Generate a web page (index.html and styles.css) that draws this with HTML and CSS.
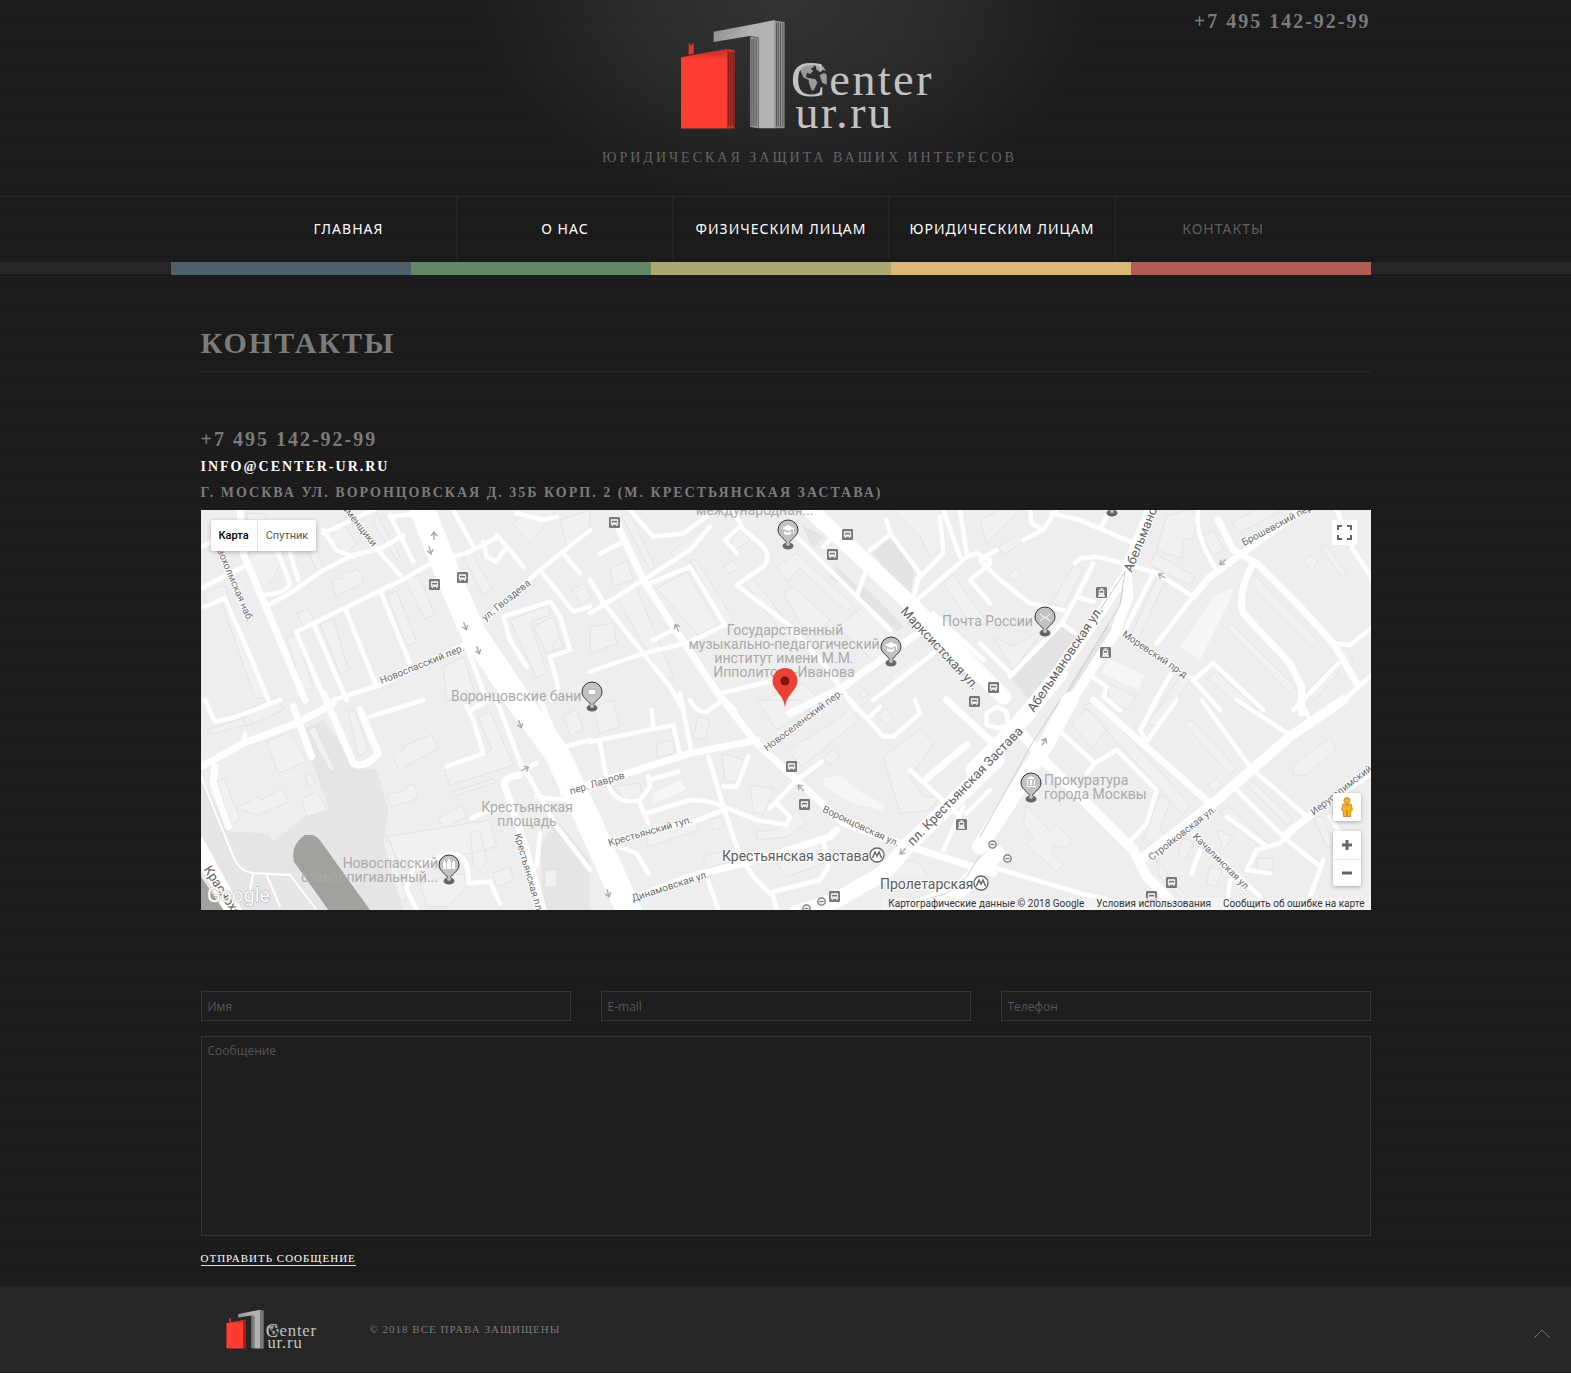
FILE: index.html
```html
<!DOCTYPE html>
<html lang="ru">
<head>
<meta charset="utf-8">
<meta name="viewport" content="width=device-width, initial-scale=1">
<title>Контакты — Center-ur.ru</title>
<link rel="stylesheet" href="styles.css">
</head>
<body>
<svg class="defs" aria-hidden="true">
  <defs>
    <linearGradient id="red-cover" x1="0" y1="0" x2="0" y2="1"><stop offset="0" stop-color="#b92c24"/><stop offset=".14" stop-color="#ff3d31"/></linearGradient>
    <linearGradient id="grey-cover" x1="0" y1="0" x2="1" y2="1"><stop offset="0" stop-color="#8b8b8b"/><stop offset=".35" stop-color="#b2b2b2"/></linearGradient>
    <symbol id="logo" viewBox="268 54 772 336">
      <path fill="#e0352b" d="M291 126l7 12 8-12v35l-15 3z"/>
      <path fill="url(#red-cover)" d="M267 172l140-26v240H267z"/>
      <path fill="#c4322a" d="M407 146l22 4v236h-22z"/>
      <path stroke="#5c1512" stroke-width="2" d="M411 156v222M416 156v222M421 156v222M426 156v222"/>
      <path fill="url(#grey-cover)" d="M366 95l184-35v325h-49V112l-27-4-108 18z"/>
      <path fill="#959595" d="M550 62l29 4v319h-29zM476 110l24 4v271l-24-4z"/>
      <path stroke="#333" stroke-width="2" d="M555 68v312M560 68v312M567 68v312M574 68v312M481 116v262M487 116v262M494 116v262"/>
      <g fill="#9a9a9a"><path d="M622 205l18-12 24-3 4 10-10 6 7 8-10 8-8-4-4 12 12 6-4 4-16-8-6-16zM652 234l20 4 6 10-12 24-6-2-8-22zM672 194l22 4 10 14-14-2-6 6-10-8zM684 226l14-8 8 6v30l-14-6z"/></g>
      <g class="logo-text"><text x="598" y="287" font-size="155">C</text><text class="wide" x="713" y="285" font-size="140">enter</text><text class="wide" x="611" y="385" font-size="140">ur.ru</text></g>
    </symbol>
    <symbol id="bus" viewBox="0 0 12 12"><rect width="12" height="12" rx="1.5" fill="#777"/><path fill="#fff" d="M3 2.5h6a1 1 0 0 1 1 1v5H9v1.2H7.800V8.500H4.200v1.200H3V8.500H2v-5a1 1 0 0 1 1-1z"/><path fill="#777" d="M3 4h6v2H3zM3 7h1v.8H3zM8 7h1v.8H8z"/></symbol>
    <symbol id="tram" viewBox="0 0 12 12"><rect width="12" height="12" rx="1.500" fill="#777"/><path fill="#fff" d="M4 1.500h4v1H6.500V3H8q1 0 1 1v4.500L10 10.500H2L3 8.500V4q0-1 1-1h1.500v-.5H4z"/><path fill="#777" d="M4 4.200h4v2H4zM4 7.500h1v1H4zM7 7.500h1v1H7z"/></symbol>
    <symbol id="pin" viewBox="-12 -12 24 34" overflow="visible"><ellipse cx="0" cy="16" rx="5.500" ry="3.500" fill="#666"/><path d="M0 16C-1 9-10 7-10 0a10 10 0 0 1 20 0C10 7 1 9 0 16z" fill="#c2c2c2" stroke="#333"/><circle cx="0" cy="14" r="2" fill="#c2c2c2"/></symbol>
    <symbol id="metro" viewBox="0 0 16 16"><circle cx="8" cy="8" r="7" fill="#fff" stroke="#666" stroke-width="1.300"/><path fill="none" stroke="#666" stroke-width="1.500" d="M3.500 11L6 5l2 4 2-4 2.500 6"/></symbol>
    <symbol id="exit" viewBox="0 0 9 9"><circle cx="4.500" cy="4.500" r="3.700" fill="#eee" stroke="#777" stroke-width="1.200"/><path stroke="#777" d="M2.500 4.500h4"/></symbol>
    <symbol id="way" viewBox="-5 -5 10 10" overflow="visible"><path fill="none" stroke="#aaa" stroke-width="1.400" d="M0 4V-3M-3 0l3-4 3 4"/></symbol>
  </defs>
</svg>

<header class="header">
  <div class="container header-row">
    <a class="brand" href="#"><svg class="brand-logo" role="img" aria-label="Center-ur.ru"><use href="#logo"/></svg><span class="tagline">Юридическая защита ваших интересов</span></a>
    <a class="phone header-phone" href="tel:+74951429299">+7 495 142-92-99</a>
  </div>
  <nav class="nav">
    <ul class="menu">
      <li><a href="#">Главная</a></li>
      <li><a href="#">О нас</a></li>
      <li><a href="#">Физическим лицам</a></li>
      <li><a href="#">Юридическим лицам</a></li>
      <li><a class="current" href="#">Контакты</a></li>
    </ul>
  </nav>
  <div class="stripe"><div class="container"><div class="stripe-colors"><i></i><i></i><i></i><i></i><i></i></div></div></div>
</header>

<main class="container main">
  <h1>Контакты</h1>
  <address class="contacts">
    <a class="phone" href="tel:+74951429299">+7 495 142-92-99</a>
    <a class="mail" href="mailto:info@center-ur.ru">info@center-ur.ru</a>
    <span class="place">г. Москва ул. Воронцовская д. 35Б корп. 2 (м. Крестьянская застава)</span>
  </address>

  <section class="map" aria-label="Карта">
    <svg class="map-canvas" viewBox="0 0 1170 400" preserveAspectRatio="xMidYMid slice">
      <rect width="1170" height="400" fill="#eee"/>
      <!-- parks and water -->
      <g transform="translate(-11 190) scale(.33333)">
        <path class="park" d="M33 230L120 395 235 400 250 425 350 345 415 320 330 90 400 60 500 200 560 210 595 330 580 430 600 520 640 630H33z"/>
        <path class="park" d="M1100 360L1200 480V630H1060L1050 440z"/>
        <path class="water" d="M345 405H365Q382 408 393 425L540 630H415L312 485Q300 435 345 405zM33 530L100 630H33z"/>
      </g>
      <!-- buildings -->
      <g transform="translate(-11 -90) scale(.33333)" class="b">
        <path d="M390 610l40-12 45 150-25 15zM290 655l30-10 50 160-30 10zM590 525l30-10 60 150-30 15zM645 480l40-15 50 120-30 12zM425 480l30-5 0-15 50-12 18 40-85 40zM320 580l35-12 20 35-30 20zM820 410l25-15 60 110-25 20zM45 520l60-25 10 40 120 300h-40L95 545l-50 0zM350 385l20-10 40 85-20 10zM450 300l50 70-30 30-50-40zM560 280l70 130-10 10-70-110zM970 310l50-40h80l-80 100zM960 600l120-45v30l-60 20 50 150-30 20zM1030 620l60-30 30 90-50 20zM1090 665l20-8 12 30-30 10zM1145 510l35-20 25 40-30 25zM760 740l60-30 40 130h-90zM1110 300l90-30v50l-70 60zM170 280h50l60 120-30 80-50 30-20-70z"/>
      </g>
      <g transform="translate(389 -10) scale(.33333)" class="b">
        <path class="d" d="M740 200l80 80-10 10-90-60zM850 160l50-50 70 100-10 80zM640 80l60 30-30 30zM820 260l120 120-20 10-120-110zM960 340l170 170-10 20-170-160z"/>
        <path d="M300 180h20l110 180-20 15zM455 235l30-5 140 180-25 20zM560 200l60-40 170 155-20 20-140-130-40 40zM580 280l30-20 110 100-60 60zM60 210l50-30 20 60-60 20zM400 200l30-20 15 25-30 15zM740 380l80-60 120 100-80 70zM900 530l80-60 20 20-70 70zM80 290l60-30 10 30 100 240-30 10zM95 50l25-10 75 160-15 8zM240 160l100-75 10 20-90 70zM200 265l90-50 95 160-60 30zM0 380l70-10 10 60-80 30zM520 600l120-50 60 60-20 30zM810 580l15-15 10 20-20 10zM910 30l140 0 0 120-30 20-30-60zM1060 250l30-25 100 140-40 20zM450 90l30 30-60 40 10-50z"/>
      </g>
      <g transform="translate(779 -10) scale(.33333)" class="b">
        <path class="d" d="M90 530L240 380l50 20-140 200zM380 380l25 10-150 240h-30z"/>
        <path class="l" d="M700 290l60-30-10 40-90 180-60-40zM385 475l110 50-20 45-110-50z"/>
        <path d="M285 190l25 15-60 120-35-15zM535 225l25 10-90 190-20-15zM525 160l120 70-15 25-120-60zM530 150l30-100 60-20 30 10-10 80-30-5-5 60zM665 110l35-20 30 60-30 15zM755 70l80-45h80l-130 70zM825 225l190 200-20 15-190-195zM755 370l190 190-15 20-190-195zM970 185l20-20 25 20-20 30zM1040 135l60 85-15 10-60-85zM975 580l70-70 30 10-70 80zM385 550l80 40-20 40-60-30zM710 515l120 110h-40l-110-90zM1070 460l30-15 20 40-10 15zM55 140l60-35 15 20-60 40zM85 225l25-20 15 20-25 20zM0 60l60-30h60L20 130zM40 410l60 30 90-50-90 120zM600 530l30 10-60 90h-40z"/>
      </g>
      <g transform="translate(-11 190) scale(.33333)" class="b">
        <path d="M230 125l70-30 50 90-85 35zM80 245l20-10 50 120-25 20zM140 325l65-35 10 10 60-35 20 40-90 40zM335 295l45-20 35 55-65 20zM345 230l20-8 10 25-20 10zM355 90l20-10 60 130-15 5zM475 35l20-5 40 120-30 20zM610 165l35-20v-10l80-30 20 40-118 65zM865 50l35-15 70 160-190 60-15-45 140-60zM790 275l120-38 5 10-120 40zM590 285l60-15v-12l22-5 13 42-80 25zM745 355l70-40 15 35-70 35zM590 410l310-50 20 80-280 70zM840 400l30-10 20 90-20 30-20-20zM1120 45l40-15 20 60-40 15zM910 520l50-20 10 40-50 20zM1065 510h35v50h-35zM690 550l130-30 10 40-60 60h-60zM150 40l110-50 20 40-110 50zM50 90l120-40 20 20-120 30zM580 430l20-10 50 180-20 0z"/>
      </g>
      <g transform="translate(389 190) scale(.33333)" class="b">
        <path d="M595 150l160-100 30-40 20 50-170 140zM395 160l70 20-30 70-30-10zM325 50l35 10-15 60-35-10zM200 130l50-10 5 40-55 10zM480 255l70 10-30 80-30-10zM70 260l80-10 5 40-50 10zM170 410l150-50 5 30-150 50zM340 470l100-30 10 35-100 30zM545 470l140-50 15 70-110 40zM880 170l110-80 40 40-70 100 40 60 50 0-30 40-90 10zM500 0l60 90 100-60-30-30zM700 170l35-25 15 25-35 25zM860 45l30-20 20 35-20 15zM10 20l60-20 20 80-60 20zM500 395l60-5 60-60 30 40-60 40-90 10zM360 360l30-10 10 30-30 10zM900 520q80-80 110 10"/>
        <path class="l" d="M700 235l50-10 60 50 75 40-10 15-90-20-80-50zM190 280l80-40 20 30-100 40z"/>
      </g>
      <g transform="translate(779 190) scale(.33333)" class="b">
        <path d="M275 70l50-45 60 60-50 60zM310 15l40-10 280 310-20 30zM635 60l135 145-20 20-140-155zM500 70l70-80 30 10-70 80zM940 195l110-80 20 30-90 80h-40zM685 255l25-20 15 20-25 20zM820 245l120 115-20 15-115-115zM745 320l120 110-20 15-125-110zM540 285l30 20-30 80 15 20-20 30-45-20zM610 415l30 10-20 50-25-10zM710 390l50 20-30 40zM690 500l35 10-15 50-30-10zM830 475h50v35h-50zM1000 350h30l30 90h-20zM140 315l70 80 20-20 50 50-30 20-30-10-10 20 40 40-20 20-90-80 20-20-30-40zM530 480l70 90 60 50h-30l-90-90z"/>
      </g>
      <!-- streets -->
      <g transform="translate(-11 -90) scale(.33333)" class="r">
        <path d="M33 505L160 440M225 560L300 520 400 450 490 405 575 385 640 345M225 525Q290 520 300 490L265 400 230 320M300 400l25 80M320 635L640 478 720 432 840 395 925 350M320 640l85 200M370 610l100 230M468 572l92 228M572 515l88 215M400 330l40 60 50 20M400 340l150-70M33 380l120-50M550 375l80 90M600 285l70 140M600 290l90-10M790 270l60 110M45 560l60-25 55 125 75 180M860 620L1050 450 1200 330M1050 450l100 125 50-15M1120 400l50 60M880 365l10 45 30 15 30-45-30-35M925 350l75 90M980 280l80 20 40-10M940 590l140-45 30 45 30 100-60 20 25 90-20 40M940 590l20 70 50 80M430 840L570 795 840 665M830 680l60 160"/>
        <path class="w2" d="M150 270l10 130 185 440"/>
        <path class="w5" d="M690 250L780 480 850 640 985 840"/>
      </g>
      <g transform="translate(389 -10) scale(.33333)" class="r">
        <path d="M620 110L900 390M700 140l40-40M800 290l25-70M890 60l10 40 90 120-20 70M900 105l-60 45M1050 50l10 110-80 80M1060 30l50 140M1110 30l20 130M970 310l160-140 30-10 40 20M1200 190l-60 50 60 70M0 340L160 240 300 150 360 80M30 160l60-30M120 30l70 80 90-10 70-50M180 250l120-50 105 175-115 55M190 420l70-35M0 240L45 315 160 460 240 560 280 630M0 515l160-55 130-30M440 160L405 120 450 80 510 130Q550 170 520 200L440 255 590 370 700 490 740 540M455 80l-25-50M390 580l170-40M720 520l80 110M1000 390l140 130M1030 340l150 140M850 600l180-140"/>
        <path class="w2" d="M75 60l85 180 90 140 140 210 40 40M600 640l160-80 210-150 30-20"/>
        <path class="w4" d="M640 10L960 310 1240 590"/>
      </g>
      <g transform="translate(779 -10) scale(.33333)" class="r">
        <path d="M150 30l5 40 35 20 25-40 15-20M215 40l85 20 150 65M0 180l50-30M0 180l60 60 90 70 100 20M130 120l60-30M365 80l15-30M285 190l15-15 50-5 80 20 100 30 110 70M340 190l-50 100-45 80L90 530M290 290l50 15M245 370l40 30M530 430L640 290M520 220L430 400M655 30Q640 100 710 210M1060 430l50 5 70-55M1070 30l50 120 60 90M410 390l230 150 60-50 150 140M640 540l80 90M580 510l-70 120M320 520l60 40-10 30 50 40M940 630l135-140M1180 520l-120 110M0 430l90 90"/>
        <path class="w2" d="M640 290l45-55L800 150 980 20M715 60l45 90 70 40L960 320l100 110 70 120M820 190Q770 280 790 340L930 490 965 560V640"/>
        <path class="w3" d="M515 20L440 200l5 90-40 110-200 310M440 220L340 370 140 660"/>
        <path class="rail" d="M435 215l-75 115M435 215l-15 100-190 315"/>
      </g>
      <g transform="translate(-11 190) scale(.33333)" class="r">
        <path d="M160 130l5-30M45 0l30 65 65-15L270 0M540 50L700 0M770 200l110-40-30-100-20-40M840 30l60-30M920 0l75 200M1010 205l30-15M1000 200l100 180 100 130M1050 0l60 140 90 170M1085 150l115-30M1040 290l80 10M845 355l55-25 60-5M650 560l20-60 110-40Q840 460 835 550L900 545l30 65M650 570l30 60M1050 400l-10 100"/>
        <path class="w2" d="M33 200l127-70L320 70 430 10M310 20l55 150M400-20l90 210Q520 210 565 160L510 30M75 200l-5 50 45 130M990 225Q935 230 945 260l55 160 60 210"/>
        <path class="w1" d="M33 230l97 240Q150 520 200 520l100 5 80 105M190 520l-10 50M230 525l40 95"/>
        <path class="w4" d="M20 430L140 650"/>
        <path class="w5" d="M970-20l130 180 90 190 130 290"/>
      </g>
      <g transform="translate(389 190) scale(.33333)" class="r">
        <path d="M0 125L250 75l20 90M185 30l5 50M270-20l35 180M300 0q20 40 50 35l50-35M355 170l45 150 50 150 40 60 60 60 10 40M30 130l20 110Q70 320 150 300l30-40-5-30M180 240l85-25M150 310l25 60M170 340l130-40q60 0 100 20l100 40 90 15 10-25-40-40M540 325l80-85 75-55M60 420l240-50 100-40M60 430l80 30 35 60M50 440l90 190M350 530l35 100M550 575l140-35 25-40-15-80M400 260h40l35-90M780 0l100 110h30l80-70-15-40M870 20l-30 30M960 210l140 130M1120 320l-60 130M1130 340l70-70"/>
        <path class="w2" d="M-80 280L300 160 500 120M400 0L500 130 620 240 760 370 930 430 1210 520M120 600L300 530 500 480 720 410 740 390M1010 235l120-100M1070 0l140 130"/>
        <path class="w4" d="M1220 180L960 430 880 520 740 600 620 640M940 640l170-70 110-110"/>
        <path class="rail" d="M900 630l170-50 60-50 70-110"/>
      </g>
      <g transform="translate(779 190) scale(.33333)" class="r">
        <path d="M0 490l300 90 180 40M235 90l110 100 65-40 120 120-30 100-55 60M345 190l-25 30M590 0L500 125l-20-35 50-90M665 0l145 200M770 0l160 105M820 210l155 135M1030 310L900 430l-70 20-30 60 70 10M770 270l140 140 110 90M960 0l30 60M640 400l200 190M635 520l25-70M740 350l120 90M1030 480l-40 110M1050 350l30 50M750 540l-10 90M20 40l30-20 30 15 5 40-30 10-35-10z"/>
        <path class="w2" d="M340 0l350 310M1180 210l-100 70-160 120"/>
        <path class="w3" d="M110 80L200 190 460 450l40 80 100 100M480 480L700 310 930 110 1090 0"/>
        <path class="w4" d="M-20 210L100 90 240-80M0 440L200 130 270 0"/>
        <path class="rail" d="M0 410L90 250 150 140 240 0"/>
      </g>
      <g fill="#777">
        <use href="#way" width="10" height="10" x="228" y="21"/><use href="#way" width="10" height="10" transform="rotate(165 229 40)" x="224" y="35"/><use href="#way" width="10" height="10" transform="rotate(160 264 116)" x="259" y="111"/><use href="#way" width="10" height="10" transform="rotate(160 277 140)" x="272" y="135"/><use href="#way" width="10" height="10" transform="rotate(160 319 214)" x="314" y="209"/><use href="#way" width="10" height="10" transform="rotate(65 324 259)" x="319" y="254"/><use href="#way" width="10" height="10" transform="rotate(-25 476 118)" x="471" y="113"/><use href="#way" width="10" height="10" transform="rotate(-45 600 278)" x="595" y="273"/><use href="#way" width="10" height="10" transform="rotate(165 407 383)" x="402" y="378"/><use href="#way" width="10" height="10" transform="rotate(-135 702 341)" x="697" y="336"/><use href="#way" width="10" height="10" transform="rotate(30 843 232)" x="838" y="227"/><use href="#way" width="10" height="10" transform="rotate(-60 961 66)" x="956" y="61"/><use href="#way" width="10" height="10" transform="rotate(-130 1022 52)" x="1017" y="47"/>
      </g>
      <g class="street">
        <text transform="translate(32 69) rotate(67)">Новохолмская наб.</text>
        <text transform="translate(157 13) rotate(52)">Каменщики</text>
        <text transform="translate(221 154) rotate(-22)">Новоспасский пер.</text>
        <text transform="translate(305 90) rotate(-39)">ул. Гвоздева</text>
        <text transform="translate(1077 14) rotate(-28)">Брошевский пер.</text>
        <text transform="translate(954 144) rotate(34)">Моревский пр-д</text>
        <text transform="translate(602 210) rotate(-37)">Новоселенский пер.</text>
        <text transform="translate(396 273) rotate(-17)">пер. Лавров</text>
        <text transform="translate(449 321) rotate(-16)">Крестьянский туп.</text>
        <text transform="translate(469 376) rotate(-18)">Динамовская ул.</text>
        <text transform="translate(328 363) rotate(74)">Крестьянская пл.</text>
        <text transform="translate(660 316) rotate(25)">Воронцовская ул.</text>
        <text transform="translate(981 323) rotate(-38)">Стройковская ул.</text>
        <text transform="translate(1021 352) rotate(45)">Качалинская ул.</text>
        <text transform="translate(1140 280) rotate(-38)">Иерусалимский</text>
      </g>
      <g class="avenue">
        <text transform="translate(739 138) rotate(47)">Марксистская ул.</text>
        <text transform="translate(864 149) rotate(-56)">Абельмановская ул.</text>
        <text transform="translate(946 13) rotate(-68)">Абельмановская</text>
        <text transform="translate(764 276) rotate(-46)">пл. Крестьянская Застава</text>
        <text transform="translate(34 400) rotate(57)">Краснохолмская</text>
      </g>
      <g class="poi">
        <text x="250" y="191">Воронцовские бани</text>
        <text x="495" y="5">международная...</text>
        <text x="741" y="116">Почта России</text>
        <text x="843" y="275">Прокуратура</text><text x="843" y="289">города Москвы</text>
        <g text-anchor="middle"><text x="584" y="125">Государственный</text><text x="583" y="139">музыкально-педагогический</text><text x="583" y="153">институт имени М.М.</text><text x="583" y="167">Ипполитова-Иванова</text><text x="326" y="302">Крестьянская</text><text x="326" y="316">площадь</text></g>
        <g text-anchor="end"><text x="237" y="358">Новоспасский</text><text x="237" y="372">ставропигиальный...</text></g>
      </g>
      <g class="station"><text x="521" y="351">Крестьянская застава</text><text x="679" y="379">Пролетарская</text></g>
      <use href="#metro" x="668" y="337" width="16" height="16"/><use href="#metro" x="772" y="365" width="16" height="16"/>
      <use href="#bus" x="228" y="69" width="11" height="11"/><use href="#bus" x="256" y="62" width="11" height="11"/><use href="#bus" x="408" y="7" width="11" height="11"/><use href="#bus" x="641" y="19" width="11" height="11"/><use href="#bus" x="626" y="39" width="11" height="11"/><use href="#bus" x="787" y="172" width="11" height="11"/><use href="#bus" x="768" y="186" width="11" height="11"/><use href="#bus" x="585" y="251" width="11" height="11"/><use href="#bus" x="598" y="289" width="11" height="11"/><use href="#bus" x="628" y="381" width="11" height="11"/><use href="#bus" x="965" y="367" width="11" height="11"/><use href="#bus" x="945" y="381" width="11" height="11"/>
      <use href="#tram" x="895" y="77" width="11" height="11"/><use href="#tram" x="899" y="137" width="11" height="11"/><use href="#tram" x="755" y="309" width="11" height="11"/>
      <use href="#exit" x="616" y="387" width="9" height="9"/><use href="#exit" x="601" y="394" width="9" height="9"/><use href="#exit" x="787" y="330" width="9" height="9"/><use href="#exit" x="802" y="344" width="9" height="9"/>
      <use href="#pin" x="575" y="8" width="24" height="34"/><use href="#pin" x="678" y="125" width="24" height="34"/><use href="#pin" x="832" y="95" width="24" height="34"/><use href="#pin" x="818" y="261" width="24" height="34"/><use href="#pin" x="236" y="343" width="24" height="34"/><use href="#pin" x="379" y="170" width="24" height="34"/><use href="#pin" x="899" y="-25" width="24" height="34"/>
      <g fill="#fff"><path d="M581 18l6-3 6 3v5h-1v-4l-5 2zM583 21q4 3 7 0v3q-3 2-7 0zM684 135l6-3 6 3v5h-1v-4l-5 2zM686 138q4 3 7 0v3q-3 2-7 0zM825 269l5-3 5 3zM826 270h1v5h-1zM829 270h2v5h-2zM833 270h1v5h-1zM825 276h10v1h-10zM242 353l1-3 2 3v6h-3zM246 352l2-4 2 4v7h-4zM251 353l2-3 1 3v6h-3zM388 180h6v4h-6z"/><path fill="none" stroke="#fff" d="M839 104l5 4 5-4M839 111l5-4 5 4"/></g>
      <path fill="#ea4335" d="M584 198C583 184 571.500 181 571.500 170.500a12.500 12.500 0 0 1 25 0C596.500 181 585 184 584 198z"/><circle cx="584" cy="171" r="4.500" fill="#811411"/>
      <text class="google" x="6" y="392">Google</text>
    </svg>
    <div class="map-types"><button type="button" class="on">Карта</button><button type="button">Спутник</button></div>
    <button type="button" class="map-full" aria-label="На весь экран"><svg viewBox="0 0 15 15" width="15" height="15"><path fill="none" stroke="#666" stroke-width="2" d="M1 5V1h4M10 1h4v4M14 10v4h-4M5 14H1v-4"/></svg></button>
    <div class="map-tools">
      <button type="button" class="pegman" aria-label="Просмотр улиц"><svg viewBox="0 0 12 20" width="12" height="20"><g fill="#fbb31b" stroke="#a07a2a" stroke-width=".7"><path d="M2 7h8l1.500 6H10l-.5 6.500h-7L2 13H.5z"/><circle cx="6" cy="3.500" r="3"/></g><path fill="#e8892b" d="M4 7h4l-2 3z"/><path stroke="#a07a2a" d="M6 13v6"/></svg></button>
      <div class="zoom"><button type="button" aria-label="Приблизить"><svg viewBox="0 0 12 12" width="12" height="12"><path stroke="#666" stroke-width="3" d="M6 1v10M1 6h10"/></svg></button><button type="button" aria-label="Отдалить"><svg viewBox="0 0 12 12" width="12" height="12"><path stroke="#666" stroke-width="3" d="M1 6h10"/></svg></button></div>
    </div>
    <div class="map-legal"><span>Картографические данные © 2018 Google</span><a href="#">Условия использования</a><a href="#">Сообщить об ошибке на карте</a></div>
  </section>

  <form class="form">
    <input type="text" name="name" placeholder="Имя" aria-label="Имя">
    <input type="email" name="email" placeholder="E-mail" aria-label="E-mail">
    <input type="tel" name="phone" placeholder="Телефон" aria-label="Телефон">
    <textarea name="message" placeholder="Сообщение" aria-label="Сообщение"></textarea>
    <button type="submit">Отправить сообщение</button>
  </form>
</main>

<footer class="footer">
  <div class="container footer-row">
    <svg class="footer-logo" role="img" aria-label="Center-ur.ru"><use href="#logo"/></svg>
    <span class="copyright">© 2018 Все права защищены</span>
  </div>
  <a class="to-top" href="#" aria-label="Наверх"><svg viewBox="0 0 18 10" width="18" height="10"><path fill="none" stroke="#777" d="M1 9l8-8 8 8"/></svg></a>
</footer>
</body>
</html>
```
FILE: styles.css
```css
*, *::before, *::after { box-sizing: border-box; }
body {
  margin: 0;
  color: #7b7b7b;
  font-family: "Liberation Serif", "Times New Roman", serif;
  background:
    repeating-linear-gradient(0deg, rgba(255,255,255,.012) 0 1px, transparent 1px 3px),
    #1a1a1a;
}
a { color: inherit; text-decoration: none; }
button { font: inherit; padding: 0; border: 0; background: none; cursor: pointer; }
.defs { position: absolute; width: 0; height: 0; }
.container { max-width: 1170px; margin: 0 auto; }

.header { background: radial-gradient(ellipse 320px 210px at 50% 0, rgba(255,255,255,.11), rgba(255,255,255,.07) 45%, transparent); }
.header-row { display: grid; grid-template-columns: 1fr auto 1fr; height: 196px; }
.brand { grid-column: 2; display: flex; flex-direction: column; align-items: center; gap: 18px; padding: 18px 0 0 48px; }
.brand-logo { width: 257px; height: 112px; }
.logo-text { fill: #c2c2c2; font-family: "Liberation Serif", serif; }
.logo-text .wide { letter-spacing: 7px; }
.tagline { font-size: 14px; line-height: 20px; letter-spacing: 3px; text-transform: uppercase; color: #646464; }
.phone { font-size: 20px; font-weight: bold; line-height: 30px; letter-spacing: 2px; }
.header-phone { justify-self: end; padding-top: 6px; }

.nav { border-top: 1px solid #272727; height: 66px; }
.menu { display: flex; justify-content: center; margin: 0; padding: 0; list-style: none; }
.menu li { min-width: 216px; height: 62px; padding: 0 20px; text-align: center; }
.menu li + li { border-left: 1px solid #272727; }
.menu a { font: 14px/64px "Noto Sans", "Open Sans", sans-serif; letter-spacing: 1px; text-transform: uppercase; color: #fff; }
.menu .current { color: #5f5f5f; }

.stripe { height: 13px; background: linear-gradient(#262626 12px, transparent 12px); }
.stripe-colors { display: flex; height: 13px; margin-left: -30px; }
.stripe-colors i { flex: 1; background: #4f5f69; }
.stripe-colors i:nth-child(2) { background: #618767; }
.stripe-colors i:nth-child(3) { background: #aba970; }
.stripe-colors i:nth-child(4) { background: #dab974; }
.stripe-colors i:nth-child(5) { background: #b15d53; }

.main { padding-top: 48px; padding-bottom: 20px; }
h1 { margin: 0 0 52px; padding-bottom: 8px; border-bottom: 1px solid #272727; font-size: 30px; line-height: 40px; letter-spacing: 2px; text-transform: uppercase; }
.contacts { display: flex; flex-direction: column; align-items: flex-start; margin-bottom: 4px; font-style: normal; }
.mail, .place { font-size: 14px; font-weight: bold; line-height: 26px; letter-spacing: 2px; text-transform: uppercase; }
.mail { color: #fff; }

.map { position: relative; height: 400px; overflow: hidden; font-family: Roboto, sans-serif; }
.map-canvas { display: block; width: 100%; height: 100%; }
.park { fill: #e5e5e5; }
.water { fill: #a1a19d; }
.b { fill: #f1f1f1; stroke: #dcdcdc; stroke-width: 2; }
.b .d { fill: #e4e4e4; }
.b .l { fill: #f7f7f7; stroke: none; }
.r { fill: none; stroke: #fff; stroke-width: 14; stroke-linecap: round; stroke-linejoin: round; }
.r .w1 { stroke-width: 6; }
.r .w2 { stroke-width: 21; }
.r .w3 { stroke-width: 30; }
.r .w4 { stroke-width: 48; }
.r .w5 { stroke-width: 76; }
.r .rail { stroke: #ccc; stroke-width: 3; }
.street, .avenue { fill: #6c6c6c; font-size: 10px; text-anchor: middle; dominant-baseline: central; }
.street, .avenue, .station { paint-order: stroke; stroke: #fff; stroke-width: 2; stroke-linejoin: round; }
.avenue { fill: #606060; font-size: 13px; }
.poi { fill: #aaa; font-size: 14px; }
.station { fill: #5c5c5c; font-size: 14px; }
.google { fill: #fff; stroke: #aaa; stroke-width: 1; paint-order: stroke; font-size: 20px; }

.map-types { position: absolute; left: 10px; top: 10px; display: flex; height: 31px; background: #fff; box-shadow: 0 1px 4px rgba(0,0,0,.3); border-radius: 2px; }
.map-types button { padding: 0 8px; font-size: 11px; color: #565656; }
.map-types .on { color: #000; font-weight: 500; border-right: 1px solid #e3e3e3; }
.map-full { position: absolute; right: 14px; top: 10px; display: grid; place-items: center; width: 25px; height: 25px; background: #fff; }
.map-tools { position: absolute; right: 10px; bottom: 24px; display: grid; gap: 10px; width: 28px; }
.map-tools button { display: grid; place-items: center; width: 28px; height: 28px; }
.pegman, .zoom { background: #fff; border-radius: 2px; box-shadow: 0 1px 4px rgba(0,0,0,.3); }
.zoom button + button { height: 27px; box-shadow: inset 0 1px #e6e6e6; }
.map-legal { position: absolute; right: 0; bottom: 0; display: flex; gap: 12px; padding: 0 6px; background: rgba(245,245,245,.7); font-size: 10px; line-height: 12px; color: #333; white-space: nowrap; }

.form { display: grid; grid-template-columns: repeat(3, 1fr); column-gap: 30px; row-gap: 15px; margin-top: 81px; }
.form input, .form textarea { width: 100%; height: 30px; margin: 0; padding: 0 6px; border: 1px solid #373737; border-radius: 0; background: #1e1e1e; color: #aaa; font: 12px/18px "Open Sans", sans-serif; outline: 0; }
.form textarea { grid-column: 1 / -1; display: block; height: 200px; padding-top: 5px; resize: none; }
.form ::placeholder { color: #565656; opacity: 1; }
.form button { justify-self: start; border-bottom: 1px solid #ddd; font-size: 11px; line-height: 14px; letter-spacing: 1px; text-transform: uppercase; color: #fff; }

.footer { position: relative; background: rgba(255,255,255,.05); }
.footer-row { display: flex; align-items: center; gap: 51px; min-height: 86px; padding: 20px 0 20px 25px; }
.footer-logo { width: 93px; height: 40px; }
.copyright { font-size: 11px; letter-spacing: 1px; text-transform: uppercase; }
.to-top { position: absolute; right: 20px; bottom: 33px; display: flex; }
```
